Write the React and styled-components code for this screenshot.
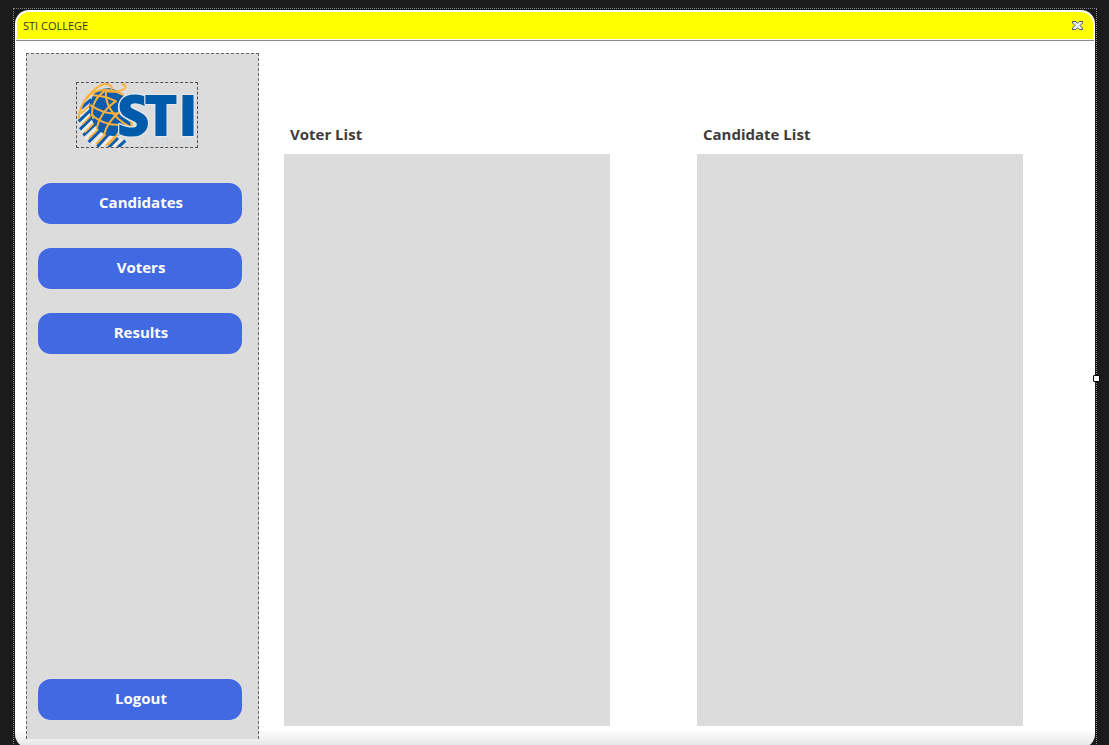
import React from "react";
import styled, { createGlobalStyle } from "styled-components";

const GlobalStyle = createGlobalStyle`
  * { box-sizing: border-box; }
  body {
    margin: 0;
    height: 100vh;
    overflow: hidden;
    background: #1b1b1b;
    font-family: "Open Sans", "Noto Sans", sans-serif;
  }
`;

const Page = styled.div`
  display: flex;
  padding: 8px 12px 0 13px;
`;

const SelectionFrame = styled.div`
  position: relative;
  flex: 1;
  display: flex;
  min-height: calc(100vh - 3px);
  padding: 1px;
  border: 1px dotted #858585;
`;

const ResizeHandle = styled.span`
  position: absolute;
  top: 50%;
  right: -4px;
  width: 7px;
  height: 7px;
  margin-top: -4px;
  background: #fff;
  border: 1px solid #000;
  border-radius: 1px;
`;

const Window = styled.div`
  flex: 1;
  display: flex;
  flex-direction: column;
  padding: 2px 1px 0;
  border-radius: 14px;
  background: linear-gradient(to top, #e2e2e2 0, #fff 18px);
`;

const TitleBar = styled.header`
  display: flex;
  align-items: center;
  justify-content: space-between;
  height: 27px;
  margin: 0 1px 1px;
  padding: 0 10px 0 6px;
  border-radius: 12px 12px 0 0;
  background: #ff0;
`;

const Title = styled.h1`
  margin: 0;
  font-size: 11px;
  line-height: 16px;
  font-weight: 400;
  color: #333;
`;

const CloseButton = styled.button`
  display: flex;
  padding: 0;
  border: 0;
  background: none;
`;

const Content = styled.div`
  flex: 1;
  display: flex;
  border-top: 1px solid #8c8c8c;
`;

const Sidebar = styled.aside`
  display: flex;
  flex-direction: column;
  width: 233px;
  margin: 12px 0 9px 10px;
  padding: 28px 16px 19px 11px;
  background: #dcdcdc;
  border: 1px dashed #646464;
  border-bottom: 0;
`;

const LogoBox = styled.div`
  display: flex;
  width: 122px;
  height: 66px;
  margin: 0 0 35px 38px;
  border: 1px dashed #505050;
`;

const Nav = styled.nav`
  flex: 1;
  display: flex;
  flex-direction: column;
  gap: 24px;
`;

const NavButton = styled.button`
  height: 41px;
  padding: 0 0 4px 2px;
  border: 0;
  border-radius: 13px;
  background: #4169e1;
  color: #fff;
  font-family: inherit;
  font-size: 15px;
  line-height: 20px;
  font-weight: 700;
`;

const Lists = styled.main`
  flex: 1;
  display: grid;
  grid-template-columns: 1fr 1fr;
  gap: 87px;
  padding: 81px 71px 22px 25px;
`;

const ListSection = styled.section`
  display: flex;
  flex-direction: column;
`;

const ListTitle = styled.h2`
  margin: 0 0 8px;
  padding-left: 6px;
  font-size: 15px;
  line-height: 24px;
  font-weight: 700;
  color: #3c3c3c;
`;

const ListPanel = styled.div`
  flex: 1;
  background: #dcdcdc;
`;

function CloseIcon() {
  return (
    <svg width="11" height="9" viewBox="0 0 11 9" aria-hidden="true">
      <path
        d="M.5.5h3.2l1.8 1.8L7.3.5h3.2v1.4L8 4.5l2.5 2.6v1.4H7.3L5.5 6.7 3.7 8.5H.5V7.1L3 4.5.5 1.9z"
        fill="#eef2ff"
        stroke="#465070"
      />
    </svg>
  );
}

function StiLogo() {
  return (
    <svg width="120" height="64" viewBox="3 3 360 192" role="img" aria-label="STI College">
      <g fill="none" stroke="#f3eee2" strokeWidth="7">
        <path d="M40 76L10 104M44 96L12 130M52 114L16 150M64 134L28 170M82 150L48 188M108 162L78 194M136 172L110 196" />
      </g>
      <g fill="none" stroke="#0b5cab" strokeWidth="9">
        <path d="M46 52L16 78M44 84L8 118M50 104L12 142M60 124L22 160M76 142L38 180M98 156L64 194M126 168L98 196M148 176L126 196" />
      </g>
      <g fill="none" stroke="#ffb03a" strokeWidth="5" strokeLinecap="round">
        <path d="M42 70L16 94M48 98L20 126M58 120L28 150M70 138L40 168M92 154L62 184M116 164L90 190" />
      </g>
      <path
        d="M50 42C62 26 84 16 106 20C124 24 138 32 144 42C130 52 124 66 126 84C128 108 164 112 166 128C168 148 150 156 130 160C112 164 96 162 78 152C54 134 36 100 40 68Z"
        fill="#0b5cab"
      />
      <g fill="none" stroke="#ffb03a" strokeWidth="6" strokeLinecap="round">
        <path d="M8 108C14 66 34 36 56 30C84 18 118 26 140 38" />
        <path d="M32 50C48 24 72 6 92 6C106 8 110 16 107 27" />
        <path d="M88 27C112 32 142 28 148 16C149 9 144 5 139 8" />
        <path d="M90 24C86 58 104 104 160 134" />
        <path d="M84 28C54 50 42 84 52 108" />
        <path d="M118 58C92 76 70 106 62 138" />
        <path d="M128 92C106 110 90 134 84 158" />
        <path d="M52 40C76 42 102 48 120 58" />
        <path d="M44 70C66 84 96 98 124 94" />
        <path d="M46 98C70 118 96 130 128 128" />
        <path d="M164 116C172 132 164 146 144 154" />
        <path d="M138 132C130 152 116 170 98 186" />
      </g>
      <g
        fontFamily='"Open Sans", "Noto Sans", sans-serif'
        fontWeight="800"
        fontSize="172"
        fill="#005cab"
        stroke="#e6e9ec"
        strokeWidth="7"
        strokeLinejoin="round"
        paintOrder="stroke"
      >
        <text x="122 204 306" y="162">STI</text>
      </g>
      <text
        x="202"
        y="194"
        fontFamily='"Liberation Serif", serif'
        fontSize="45"
        fill="#d3d8dd"
      >
        College
      </text>
    </svg>
  );
}

const navItems = ["Candidates", "Voters", "Results"];
const lists = ["Voter List", "Candidate List"];

export default function App() {
  return (
    <>
      <GlobalStyle />
      <Page>
        <SelectionFrame>
          <Window>
            <TitleBar>
              <Title>STI COLLEGE</Title>
              <CloseButton type="button" aria-label="Close">
                <CloseIcon />
              </CloseButton>
            </TitleBar>
            <Content>
              <Sidebar>
                <LogoBox>
                  <StiLogo />
                </LogoBox>
                <Nav>
                  {navItems.map((item) => (
                    <NavButton key={item} type="button">{item}</NavButton>
                  ))}
                </Nav>
                <NavButton type="button">Logout</NavButton>
              </Sidebar>
              <Lists>
                {lists.map((name) => (
                  <ListSection key={name}>
                    <ListTitle>{name}</ListTitle>
                    <ListPanel />
                  </ListSection>
                ))}
              </Lists>
            </Content>
          </Window>
          <ResizeHandle />
        </SelectionFrame>
      </Page>
    </>
  );
}
